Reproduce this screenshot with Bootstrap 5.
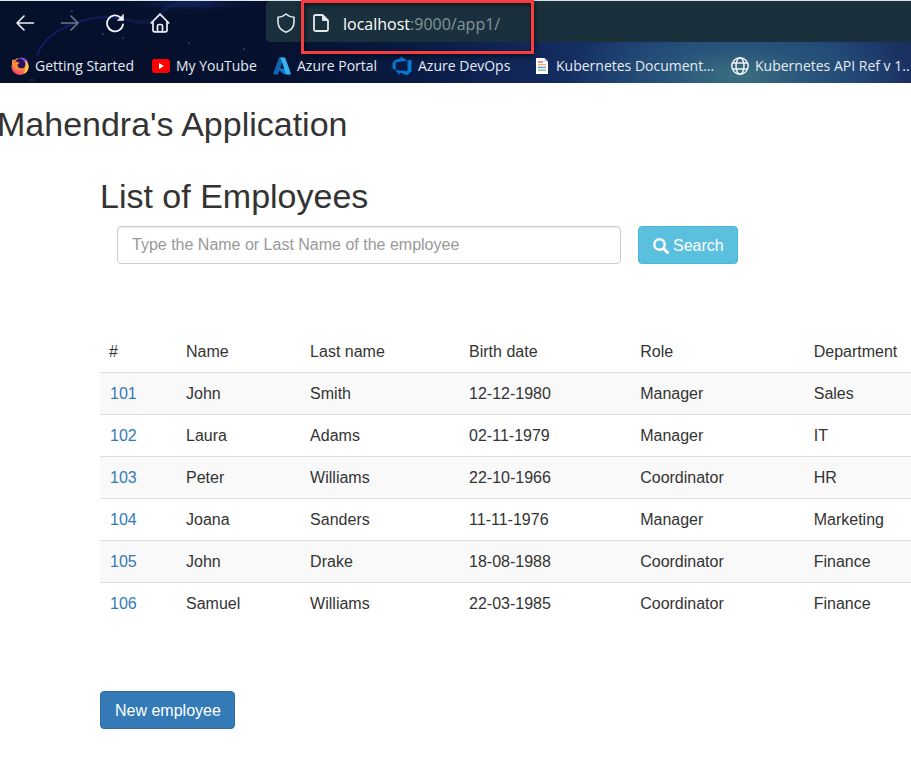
<!DOCTYPE html>
<html lang="en">
<head>
<meta charset="utf-8">
<meta name="viewport" content="width=device-width, initial-scale=1">
<title>Mahendra's Application</title>
<link href="https://cdn.jsdelivr.net/npm/bootstrap@5.3.0/dist/css/bootstrap.min.css" rel="stylesheet">
<style>
  body { font-family: "Liberation Sans", Arial, sans-serif; font-size: 16px; line-height: 22px; color: #333; background: #fff; overflow-x: hidden; }
  svg { display: block; flex: none; }

  /* Browser chrome */
  .browser {
    font-family: "Open Sans", "Noto Sans", sans-serif; color: #e6eaf2;
    border-top: 1px solid #dfe5ec;
    background:
      radial-gradient(ellipse 170px 60px at 81% 90%, #3b6f80 0%, rgba(43,91,124,.7) 45%, rgba(30,66,120,0) 100%),
      radial-gradient(ellipse 60px 6px at 21% 4%, rgba(29,51,135,.5), rgba(29,51,135,0)),
      linear-gradient(90deg, #05102b 0%, #05112e 30%, #0a1c45 46%, #122a5c 60%, #1e4378 76%, #1e4275 90%, #1a3060 100%);
  }
  .trail { position: absolute; left: 0; top: 0; pointer-events: none; }
  .tools { height: 41px; }
  .tool-btn { width: 24px; height: 24px; padding: 0; border: 0; background: none; color: #eef1f6; display: grid; place-items: center; }
  .tool-btn:disabled { color: #6d7587; }
  .nav-tools { width: 266px; padding: 2px 0 0 13px; gap: 21px; }
  .address { background: #1a313d; border-radius: 4px 0 0 4px; padding: 2px 0 0 11px; gap: 18px; color: #e2e8ea; }
  .url { font-size: 16px; line-height: 22px; color: #87939a; padding: 2px 0 0; margin-left: -4px; }
  .url b { font-weight: 400; color: #fff; }
  .marker { position: absolute; left: 35px; top: -1px; width: 233px; height: 54px; border: 3px solid #f83d40; box-shadow: 1px 2px 5px rgba(0,0,0,.6), inset 1px 2px 5px rgba(0,0,0,.6); z-index: 2; pointer-events: none; }
  .bookmarks { display: grid; grid-template-columns: 141px 121px 119px 142px 197px auto; height: 41px; padding: 6px 0 0 11px; font-size: 14px; line-height: 20px; }
  .bookmarks a { color: #e6eaf2; gap: 6px; }

  /* Page */
  .title { font-size: 34px; line-height: 38px; font-weight: 400; margin: 0; }
  .app-title { margin-left: -3px; padding-top: 22px; }
  .content { margin-left: 100px; padding-top: 34px; }
  .search-row { margin: 11px 0 0 17px; gap: 17px; }
  .search-box { max-width: 504px; height: 38px; padding: 6px 14px; border: 1px solid #ccc; border-radius: 4px; font-size: 16px; color: #555; box-shadow: inset 0 1px 1px rgba(0,0,0,.075); }
  .search-box::placeholder { color: #999; }
  .app-btn { height: 38px; padding: 7px 13px 6px 14px; border-radius: 4px; font-size: 16px; line-height: 22px; color: #fff; }
  .search-btn { background: #5bc0de; border-color: #46b8da; gap: 4px; }
  .new-btn { background: #337ab7; border-color: #2e6da4; }
  .staff { table-layout: fixed; margin: 67px 0 0; color: #333; }
  .staff > :not(caption) > * > * { padding: 10px 0 9px 9px; border-bottom: 0; border-top: 1px solid #ddd; line-height: 22px; font-weight: 400; color: #333; white-space: nowrap; background: none; box-shadow: none; }
  .staff > thead > tr > th { border-top: 0; }
  .staff > tbody > tr:nth-child(odd) > * { background: #f9f9f9; }
  .staff a { color: #337ab7; text-decoration: none; padding-left: 1px; }
  .actions { padding: 67px 0 45px; }
</style>
<script src="https://cdn.jsdelivr.net/npm/bootstrap@5.3.0/dist/js/bootstrap.bundle.min.js"></script>
</head>
<body>
<header class="browser position-relative">
  <svg class="trail" width="300" height="82" viewBox="0 0 300 82" fill="none" aria-hidden="true">
    <path d="M37 54C43 38 58 27 82 20S118 17 132 20" stroke="#17237c" stroke-width="2" opacity=".65"/>
    <path d="M132 20Q155 25 162 12T210 0" stroke="#15285f" stroke-width="4" opacity=".45"/>
    <g fill="#2d4272"><circle cx="103" cy="33" r="1"/><circle cx="123" cy="37" r="1"/><circle cx="189" cy="42" r="1"/><circle cx="72" cy="10" r="1"/><circle cx="244" cy="48" r="1"/><circle cx="32" cy="79" r="1"/></g>
  </svg>
  <div class="tools d-flex position-relative">
    <div class="nav-tools d-flex align-items-center">
      <button class="tool-btn" type="button" aria-label="Back"><svg width="20" height="18" viewBox="0 0 20 18" fill="none" stroke="currentColor" stroke-width="1.6" stroke-linecap="round" stroke-linejoin="round"><path d="M18.500 9H2M9 2L2 9l7 7"/></svg></button>
      <button class="tool-btn" type="button" aria-label="Forward" disabled><svg width="20" height="18" viewBox="0 0 20 18" fill="none" stroke="currentColor" stroke-width="1.6" stroke-linecap="round" stroke-linejoin="round"><path d="M1.500 9H18M11 2l7 7-7 7"/></svg></button>
      <button class="tool-btn" type="button" aria-label="Reload"><svg width="20" height="20" viewBox="0 0 20 20" fill="none" stroke="currentColor" stroke-width="1.8" stroke-linecap="round"><path d="M15.800 4.800A8 8 0 1 0 18 11.500"/><path d="M18.500 1.500V7.500H12.500Z" fill="currentColor" stroke-width=".6" stroke-linejoin="round"/></svg></button>
      <button class="tool-btn" type="button" aria-label="Home"><svg width="20" height="20" viewBox="0 0 20 20" fill="none" stroke="currentColor" stroke-width="1.700" stroke-linecap="round" stroke-linejoin="round"><path d="M1.200 10L10 1.200 18.800 10M3 8.500V17q0 1.800 1.800 1.800H15.200Q17 18.800 17 17V8.500"/><path d="M7.500 18.500V13q0-1.500 1.500-1.500h2q1.500 0 1.500 1.500v5.500"/></svg></button>
    </div>
    <div class="address d-flex align-items-center flex-grow-1 position-relative">
      <svg width="18" height="20" viewBox="0 0 18 20" fill="none" stroke="currentColor" stroke-width="1.600" stroke-linejoin="round"><path d="M9 1C11 3 14 4 17 4.300V9c0 4.800-3 8.300-8 10.200C4 17.300 1 13.800 1 9V4.300C4 4 7 3 9 1Z"/></svg>
      <svg width="16" height="18" viewBox="0 0 16 18" fill="none" stroke="currentColor" stroke-width="1.800" stroke-linejoin="round"><path d="M9.500 1H2.500Q1 1 1 2.500v13Q1 17 2.500 17h11q1.500 0 1.500-1.500V6.500Z"/><path d="M9.500 1v5.500H15Z" fill="currentColor" stroke-width="1"/></svg>
      <div class="url"><b>localhost</b>:9000/app1/</div>
      <div class="marker"></div>
    </div>
  </div>
  <nav class="bookmarks position-relative align-items-center text-nowrap" aria-label="Bookmarks">
    <a href="#" class="d-flex align-items-center text-decoration-none">
      <svg width="18" height="18" viewBox="0 0 18 18"><defs><linearGradient id="fox" x1=".8" y1="0" x2=".3" y2="1"><stop stop-color="#ffdd43"/><stop offset=".45" stop-color="#ff9640"/><stop offset="1" stop-color="#f7386d"/></linearGradient></defs><circle cx="9" cy="9.500" r="8.500" fill="url(#fox)"/><path d="M5 3.500C7 0 12 0 14 3.500c2 3 .5 8-4 8.300C6 12 4 9 5 7L3.500 5.500Z" fill="#25145d"/><path d="M8 1c4-2 10 1 9.500 8L15 10C15 5 12 2 8 1Z" fill="#8546d8"/><path d="M14 3c3 2 4 6 3.500 8-1 4-3 5-5 6 2-3 3-8 1.500-14Z" fill="#ffca3e"/><path d="M1 4l1-2 2 2.500 3 .5 1.500 1.500-2 1L7 10c2 2 4 1 5 1-2 3-7 3-9 0S1 6 1 4Z" fill="#ff8a3a"/></svg>
      <span>Getting Started</span></a>
    <a href="#" class="d-flex align-items-center text-decoration-none">
      <svg width="18" height="14" viewBox="0 0 18 14"><rect width="18" height="14" rx="3" fill="#f00"/><path d="M7 4l5 3-5 3Z" fill="#fff"/></svg>
      <span>My YouTube</span></a>
    <a href="#" class="d-flex align-items-center text-decoration-none">
      <svg width="18" height="18" viewBox="0 0 18 18"><path d="M6 .5h5L5.500 16.300q-.4 1.200-1.700 1.200H1.500Q0 17.500.4 16Z" fill="#1264ad"/><path d="M4.500 11.500H14l1 5.500h-4.500Z" fill="#0a79d4"/><path d="M6.500.5H11q1.200 0 1.600 1.200L17.700 16q.5 1.500-1 1.500H11.500q1.600-.2 1.200-1.500L7.800 1.700Q7.500.7 6.500.5Z" fill="#36b3ee"/></svg>
      <span>Azure Portal</span></a>
    <a href="#" class="d-flex align-items-center text-decoration-none">
      <svg width="20" height="20" viewBox="0 0 20 20"><path fill-rule="evenodd" d="M19.500 3.800v11.700L15 19.300l-7.500-2.700v2.800L3.500 14 .5 12.500V7.300l2.400-3.100L8.700 2V.2l6.500 4.300ZM3.700 6.500V14l11.800 1.300V4.600Z" fill="#0878d6"/></svg>
      <span>Azure DevOps</span></a>
    <a href="#" class="d-flex align-items-center text-decoration-none">
      <svg width="16" height="16" viewBox="0 0 16 16"><path d="M2 0h8.500L14 3.500V16H2Z" fill="#fff"/><path d="M10.500 0v3.500H14Z" fill="#bcc7db"/><g stroke-width="1.400"><path d="M4 4h5" stroke="#e65b55"/><path d="M4 6.700h8" stroke="#f4b45f"/><path d="M4 9.400h8" stroke="#5e98e8"/><path d="M4 12.100h8" stroke="#7fc392"/></g></svg>
      <span>Kubernetes Document...</span></a>
    <a href="#" class="d-flex align-items-center text-decoration-none">
      <svg width="18" height="18" viewBox="0 0 18 18" fill="none" stroke="#eef1f6" stroke-width="1.500"><circle cx="9" cy="9" r="8.200"/><ellipse cx="9" cy="9" rx="4" ry="8.200"/><path d="M1.500 6h15M1.500 12h15"/></svg>
      <span>Kubernetes API Ref v 1..</span></a>
  </nav>
</header>

<main>
  <h1 class="title app-title">Mahendra's Application</h1>
  <section class="content">
    <h2 class="title">List of Employees</h2>
    <form class="search-row d-flex" role="search">
      <input class="search-box form-control" type="text" aria-label="Employee name" placeholder="Type the Name or Last Name of the employee">
      <button class="app-btn search-btn btn d-flex align-items-center" type="button">
        <svg width="16" height="16" viewBox="0 0 16 16" fill="none" stroke="#fff" aria-hidden="true"><circle cx="6.500" cy="6.500" r="5.200" stroke-width="2.400"/><path d="M10.500 10.500L14.500 14.500" stroke-width="3" stroke-linecap="round"/></svg>
        Search</button>
    </form>
    <table class="staff table">
      <colgroup><col style="width:9.5%"><col style="width:15.3%"><col style="width:19.6%"><col style="width:21.1%"><col style="width:21.4%"><col></colgroup>
      <thead><tr><th scope="col">#</th><th scope="col">Name</th><th scope="col">Last name</th><th scope="col">Birth date</th><th scope="col">Role</th><th scope="col">Department</th></tr></thead>
      <tbody>
        <tr><td><a href="#">101</a></td><td>John</td><td>Smith</td><td>12-12-1980</td><td>Manager</td><td>Sales</td></tr>
        <tr><td><a href="#">102</a></td><td>Laura</td><td>Adams</td><td>02-11-1979</td><td>Manager</td><td>IT</td></tr>
        <tr><td><a href="#">103</a></td><td>Peter</td><td>Williams</td><td>22-10-1966</td><td>Coordinator</td><td>HR</td></tr>
        <tr><td><a href="#">104</a></td><td>Joana</td><td>Sanders</td><td>11-11-1976</td><td>Manager</td><td>Marketing</td></tr>
        <tr><td><a href="#">105</a></td><td>John</td><td>Drake</td><td>18-08-1988</td><td>Coordinator</td><td>Finance</td></tr>
        <tr><td><a href="#">106</a></td><td>Samuel</td><td>Williams</td><td>22-03-1985</td><td>Coordinator</td><td>Finance</td></tr>
      </tbody>
    </table>
    <div class="actions"><button class="app-btn new-btn btn" type="button">New employee</button></div>
  </section>
</main>
</body>
</html>
